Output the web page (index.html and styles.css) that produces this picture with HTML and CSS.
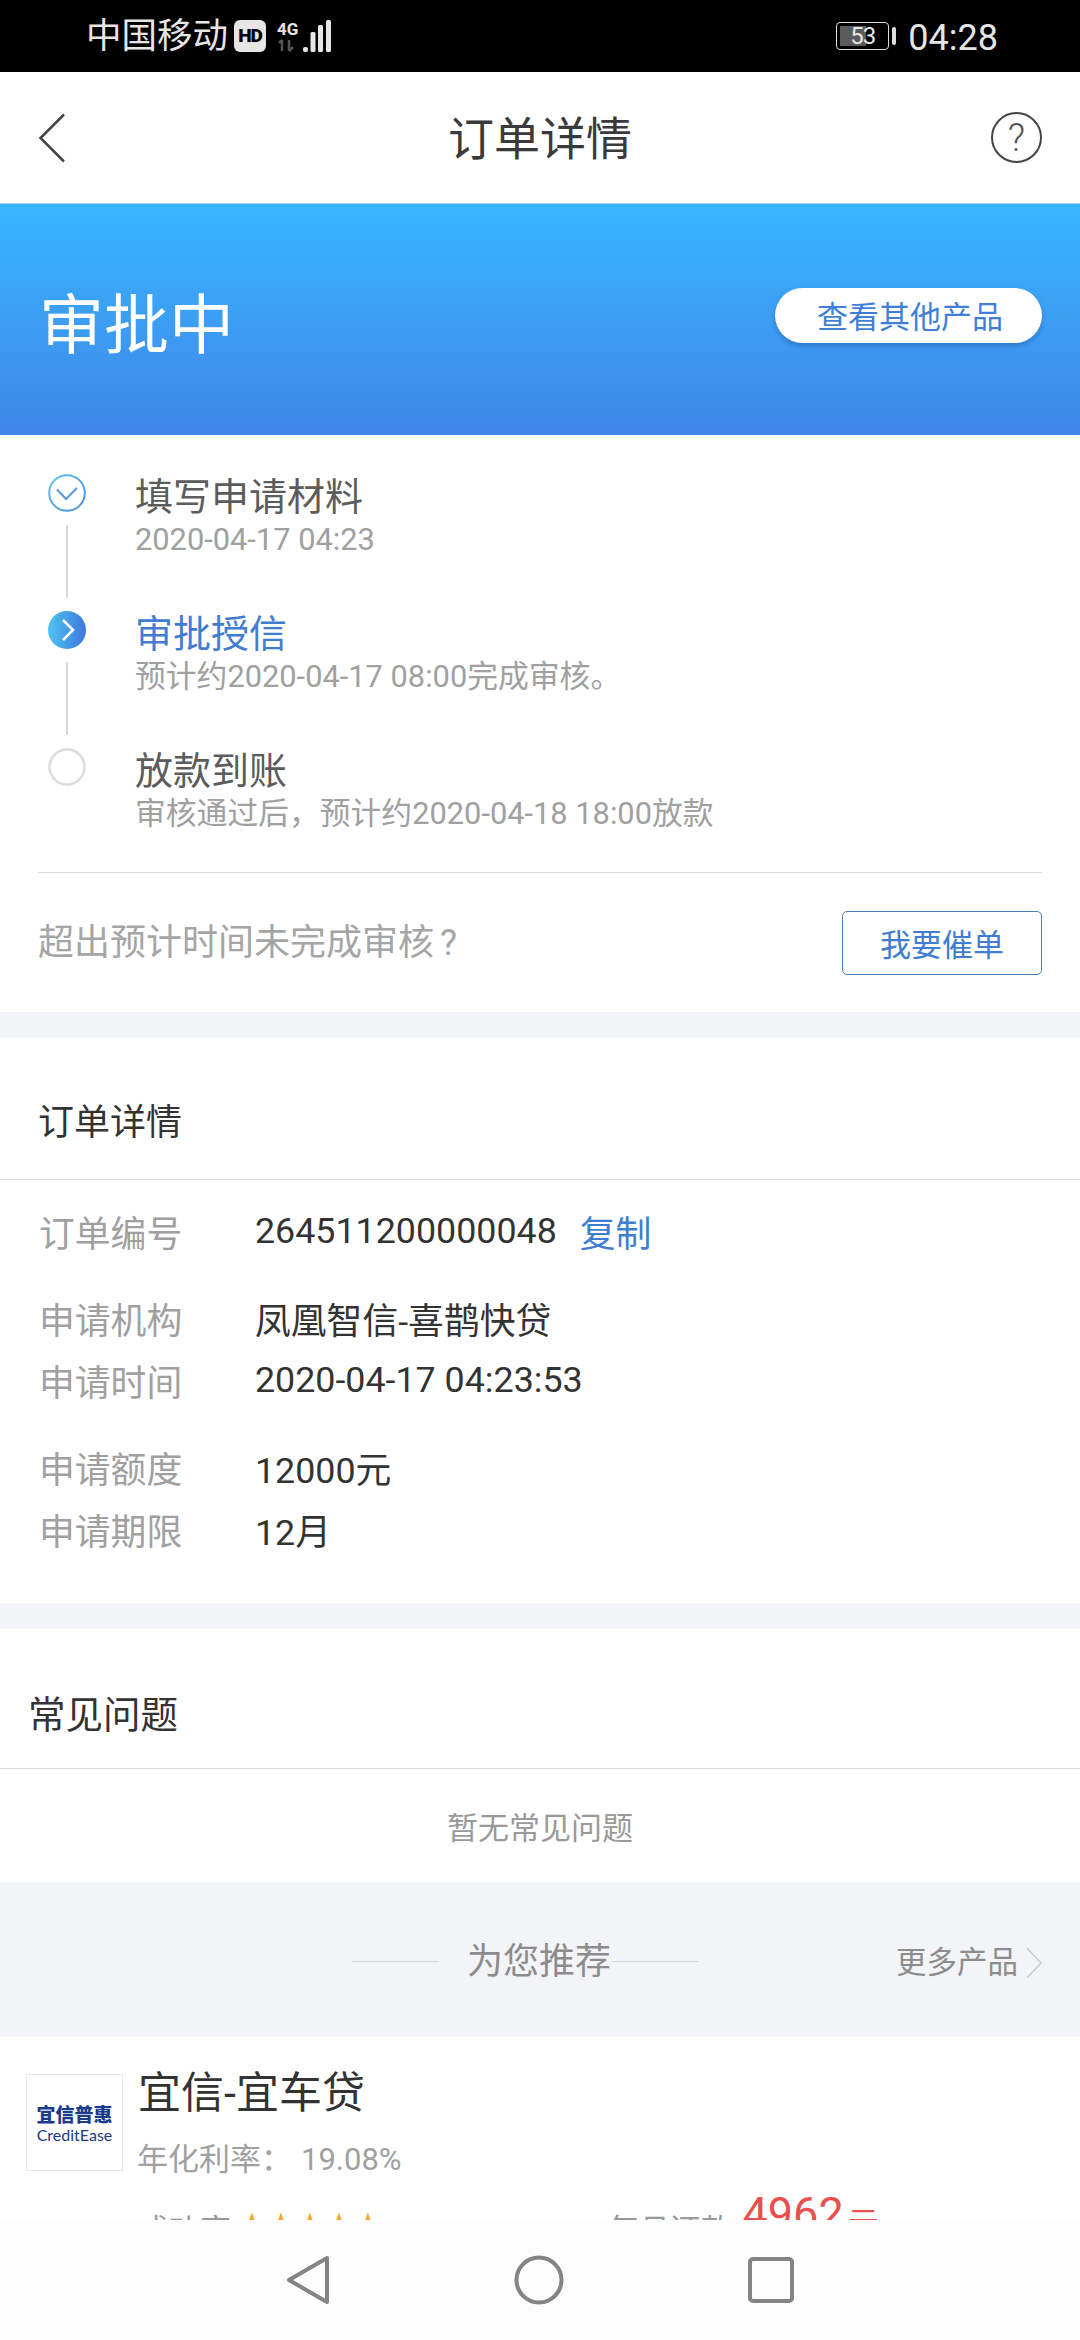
FILE: index.html
```html
<!DOCTYPE html>
<html lang="zh">
<head>
<meta charset="utf-8">
<title>订单详情</title>
<link rel="stylesheet" href="styles.css">
</head>
<body>
<div class="app">
  <header class="status">
    <div class="status-left">
      <span class="carrier">中国移动</span>
      <span class="hd">HD</span>
      <span class="net">
        <span class="net-label">4G</span>
        <svg class="net-arrows" width="18" height="13" viewBox="0 0 18 13"><path d="M5 1v11M2 4l3-3M12 1v11M12 12l4-4" fill="none" stroke="#555" stroke-width="2.500"/></svg>
      </span>
      <svg class="signal" width="28" height="32" viewBox="0 0 28 32"><g fill="#e6e6e6"><rect x="0" y="27" width="5" height="5" rx="2"/><rect x="7.500" y="12" width="5" height="20" rx="1.500"/><rect x="15" y="5" width="5" height="27" rx="1.500"/><rect x="23" y="0" width="5" height="32" rx="1.500"/></g></svg>
    </div>
    <div class="status-right">
      <span class="battery"><span class="battery-fill"></span><span class="battery-num">53</span></span>
      <span class="battery-nub"></span>
      <span class="time">04:28</span>
    </div>
  </header>

  <nav class="topbar">
    <svg class="back" width="28" height="50" viewBox="0 0 28 50"><path d="M26 1.500 2.500 25 26 48.500" fill="none" stroke="#444" stroke-width="2.500"/></svg>
    <h1 class="topbar-title">订单详情</h1>
    <span class="help">?</span>
  </nav>

  <main class="content">
    <section class="banner">
      <div class="banner-title">审批中</div>
      <button class="banner-btn">查看其他产品</button>
    </section>

    <section class="progress">
      <div class="steps">
        <div class="step">
          <div class="rail">
            <svg class="dot" width="38" height="38" viewBox="0 0 38 38"><defs><linearGradient id="ring" x1="0" y1="0" x2="1" y2="1"><stop offset="0" stop-color="#5cc4e8"/><stop offset="1" stop-color="#4d8de0"/></linearGradient></defs><circle cx="19" cy="19" r="17.800" fill="none" stroke="url(#ring)" stroke-width="2"/><path d="M9 15.500 18 25 29 14" fill="none" stroke="#5a9ae0" stroke-width="2.200"/></svg>
            <span class="rail-line"></span>
          </div>
          <div class="step-text">
            <div class="step-title">填写申请材料</div>
            <div class="step-sub">2020-04-17 04:23</div>
          </div>
        </div>
        <div class="step">
          <div class="rail">
            <svg class="dot" width="38" height="38" viewBox="0 0 38 38"><defs><linearGradient id="fill" x1="0" y1="0" x2="1" y2="0"><stop offset="0" stop-color="#4fc3f0"/><stop offset="1" stop-color="#3d78e0"/></linearGradient></defs><circle cx="19" cy="19" r="19" fill="url(#fill)"/><path d="M15 9 25 19 15 29" fill="none" stroke="#fff" stroke-width="2.500"/></svg>
            <span class="rail-line"></span>
          </div>
          <div class="step-text">
            <div class="step-title step-title-active">审批授信</div>
            <div class="step-sub">预计约2020-04-17 08:00完成审核。</div>
          </div>
        </div>
        <div class="step step-last">
          <div class="rail">
            <svg class="dot" width="38" height="38" viewBox="0 0 38 38"><circle cx="19" cy="19" r="17.500" fill="none" stroke="#dcdcdc" stroke-width="2.500"/></svg>
          </div>
          <div class="step-text">
            <div class="step-title">放款到账</div>
            <div class="step-sub">审核通过后，预计约2020-04-18 18:00放款</div>
          </div>
        </div>
      </div>
      <div class="urge">
        <span class="urge-text">超出预计时间未完成审核<span class="urge-q">?</span></span>
        <button class="urge-btn">我要催单</button>
      </div>
    </section>

    <section class="details">
      <h2 class="details-head">订单详情</h2>
      <div class="details-body">
        <div class="row"><span class="row-label">订单编号</span><span class="row-value">264511200000048</span><span class="copy">复制</span></div>
        <div class="group">
          <div class="row"><span class="row-label">申请机构</span><span class="row-value">凤凰智信-喜鹊快贷</span></div>
          <div class="row"><span class="row-label">申请时间</span><span class="row-value">2020-04-17 04:23:53</span></div>
        </div>
        <div class="group">
          <div class="row"><span class="row-label">申请额度</span><span class="row-value">12000元</span></div>
          <div class="row"><span class="row-label">申请期限</span><span class="row-value">12月</span></div>
        </div>
      </div>
    </section>

    <section class="faq">
      <h2 class="faq-head">常见问题</h2>
      <div class="faq-empty">暂无常见问题</div>
    </section>

    <section class="recommend">
      <div class="rec-center">
        <span class="rec-line"></span>
        <span class="rec-title">为您推荐</span>
        <span class="rec-line"></span>
      </div>
      <div class="rec-more">
        <span>更多产品</span>
        <svg width="16" height="32" viewBox="0 0 16 32"><path d="M1 1 15 16 1 31" fill="none" stroke="#ccc" stroke-width="1.500"/></svg>
      </div>
    </section>

    <section class="product">
      <div class="logo">
        <span class="logo-cn">宜信普惠</span>
        <span class="logo-en">CreditEase</span>
      </div>
      <div class="product-info">
        <div class="product-name">宜信-宜车贷</div>
        <div class="product-rate"><span>年化利率</span><span class="colon">：</span><span class="rate-num">19.08%</span></div>
        <div class="product-meta">
          <div class="meta-left"><span>成功率</span><span class="stars">★★★★★</span></div>
          <div class="meta-right"><span class="pay-label">每月还款:</span><span class="pay">4962</span><span class="pay-unit">元</span></div>
        </div>
      </div>
    </section>
  </main>

  <footer class="sysnav">
    <svg width="44" height="50" viewBox="0 0 44 50"><path d="M41 3 3 25 41 47Z" fill="none" stroke="#848484" stroke-width="4" stroke-linejoin="round"/></svg>
    <svg width="50" height="50" viewBox="0 0 50 50"><circle cx="25" cy="25" r="22.500" fill="none" stroke="#848484" stroke-width="4"/></svg>
    <svg width="46" height="46" viewBox="0 0 46 46"><rect x="2" y="2" width="42" height="42" rx="3" fill="none" stroke="#848484" stroke-width="4"/></svg>
  </footer>
</div>
</body>
</html>
```
FILE: styles.css
```css
* { box-sizing: border-box; }
html, body { margin: 0; padding: 0; background: #fff; }
body { font-family: Roboto, "Noto Sans CJK SC", sans-serif; color: #333; }
h1, h2 { margin: 0; font-weight: 400; }
button { font-family: inherit; background: none; border: 0; padding: 0; }

.app { width: 1080px; height: 2340px; display: flex; flex-direction: column; overflow: hidden; }

/* status bar */
.status { flex: none; height: 72px; background: #000; color: #e6e6e6; display: flex; align-items: center; justify-content: space-between; padding: 0 82px 0 86px; }
.status-left, .status-right { display: flex; align-items: center; }
.carrier { font-size: 35.500px; line-height: 40px; }
.hd { width: 32px; height: 32px; margin-left: 6px; border-radius: 6px; background: #e6e6e6; color: #000; font-size: 19px; font-weight: 900; line-height: 32px; text-align: center; letter-spacing: -1px; }
.net { width: 20px; margin-left: 11px; display: flex; flex-direction: column; gap: 2px; }
.net-label { font-size: 17px; font-weight: 700; line-height: 16px; color: #e6e6e6; }
.signal { margin-left: 6px; }
.battery { position: relative; width: 53px; height: 28px; border: 1.500px solid #ddd; border-radius: 4px; display: flex; align-items: center; justify-content: center; }
.battery-fill { position: absolute; left: 3px; top: 3px; bottom: 3px; width: 26px; background: #5a5a5a; }
.battery-num { position: relative; font-size: 24px; line-height: 26px; letter-spacing: -1px; }
.battery-nub { width: 4px; height: 18px; margin-left: 3px; border-radius: 2px; background: #ddd; }
.time { font-size: 36px; line-height: 40px; margin-left: 12px; margin-top: 3px; }

/* top bar */
.topbar { flex: none; height: 132px; display: grid; grid-template-columns: 51px 1fr 51px; align-items: center; padding: 0 38px; background: #fff; border-bottom: 1px solid #a8d8f0; }
.topbar-title { font-size: 46px; line-height: 60px; color: #3a3a3a; text-align: center; margin-top: 3px; }
.help { width: 51px; height: 51px; border: 2.500px solid #444; border-radius: 50%; display: flex; align-items: center; justify-content: center; font-size: 38px; line-height: 40px; color: #555; font-weight: 300; }

.content { flex: 1; min-height: 0; overflow: hidden; background: #fff; }

/* banner */
.banner { height: 231px; background: linear-gradient(180deg, #38b6ff 0%, #3f86e8 100%); display: flex; align-items: center; justify-content: space-between; padding: 0 38px 0 39px; }
.banner-title { font-size: 65px; line-height: 80px; color: #fff; margin-top: 12px; }
.banner-btn { width: 267px; height: 55px; margin-bottom: 8px; padding: 5px 0 0 3px; border-radius: 28px; background: #fff; color: #3f7fd8; font-size: 31px; line-height: 50px; box-shadow: 0 3px 5px rgba(30, 70, 140, .35); }

/* progress */
.progress { background: #fff; padding-top: 39px; }
.steps { padding-left: 48px; }
.step { height: 137px; display: flex; }
.step-last { height: 124px; }
.rail { width: 38px; display: flex; flex-direction: column; align-items: center; }
.dot { flex: none; display: block; }
.rail-line { width: 2px; height: 73px; margin-top: 13px; background: #d9d9d9; }
.step-text { margin-left: 49px; }
.step-title { font-size: 38px; line-height: 46px; color: #5c5c5c; }
.step-title-active { color: #3f7dd0; }
.step-sub { font-size: 30.800px; line-height: 40px; color: #a0a0a0; }
.urge { margin: 0 38px; height: 140px; border-top: 1.500px solid #dcdcdc; display: flex; align-items: center; justify-content: space-between; }
.urge-text { font-size: 36px; line-height: 46px; color: #a5a5a5; }
.urge-q { margin-left: 6px; }
.urge-btn { width: 200px; height: 64px; border: 1.500px solid #4a82b8; border-radius: 5px; color: #3f7dd0; font-size: 31px; }

/* details */
.details { margin-top: 26px; background: #fff; box-shadow: 0 -26px 0 #f2f4f8; height: 565px; }
.details-head { height: 142px; padding: 60px 38px 0; font-size: 36px; line-height: 50px; color: #333; border-bottom: 1.500px solid #dcdcdc; }
.details-body { padding: 20px 38px 0 39px; display: flex; flex-direction: column; gap: 25px; }
.row { display: flex; align-items: center; height: 62px; font-size: 35.800px; }
.row-label { width: 216px; color: #a0a0a0; }
.row-value { color: #333; }
.copy { margin-left: 23px; color: #3f7dd0; }

/* faq */
.faq { border-top: 26px solid #f2f4f8; height: 279px; background: #fff; }
.faq-head { height: 140px; padding-left: 28px; padding-top: 61px; font-size: 37.500px; line-height: 50px; color: #333; border-bottom: 1.500px solid #dcdcdc; }
.faq-empty { height: 113px; display: flex; align-items: center; justify-content: center; font-size: 31px; color: #999; }

/* recommend */
.recommend { position: relative; height: 155px; background: #f2f4f8; display: flex; align-items: center; justify-content: center; }
.rec-center { display: flex; align-items: center; margin-top: 4px; margin-right: 30px; }
.rec-line { width: 87px; height: 1px; background: #d6d6d6; }
.rec-title { font-size: 36px; line-height: 46px; color: #8c8c8c; padding-left: 28px; width: 172px; }
.rec-more { position: absolute; right: 38px; top: 59px; display: flex; align-items: center; gap: 8px; font-size: 30.500px; line-height: 44px; color: #8c8c8c; }

/* product */
.product { display: flex; padding: 37px 0 0 26px; background: #fff; }
.logo { flex: none; width: 97px; height: 97px; border: 1px solid #e8e8e8; display: flex; flex-direction: column; align-items: center; justify-content: center; padding-top: 2px; color: #1a3a8c; }
.logo-cn { font-size: 19px; line-height: 22px; font-weight: 900; white-space: nowrap; }
.logo-en { font-family: Lato, sans-serif; font-size: 16px; line-height: 16px; }
.product-info { flex: 1; margin-left: 15px; margin-top: -8px; }
.product-name { font-size: 43px; line-height: 54px; color: #333; }
.product-rate { margin-top: 17px; margin-left: -1px; font-size: 31px; line-height: 40px; color: #a0a0a0; }
.colon { font-family: "Noto Sans CJK TC", sans-serif; }
.rate-num { margin-left: 9px; }
.product-meta { display: flex; align-items: flex-start; margin-top: 26px; font-size: 31px; line-height: 50px; color: #999; }
.meta-left { width: 470px; }
.stars { margin-left: 10px; font-size: 22px; line-height: 1; color: #f5a623; letter-spacing: 7px; vertical-align: 11px; }
.meta-right { display: flex; align-items: flex-start; margin-top: -8px; }
.pay-label { margin-top: 8px; }
.pay { font-size: 45px; margin-left: 3px; color: #e8504e; line-height: 50px; margin-top: -9px; }
.pay-unit { margin-top: 1px; margin-left: 4px; font-size: 31px; color: #e8504e; }

/* system nav */
.sysnav { flex: none; height: 120px; background: #fcfcfc; display: flex; align-items: center; padding-left: 286px; gap: 184px; }
```
